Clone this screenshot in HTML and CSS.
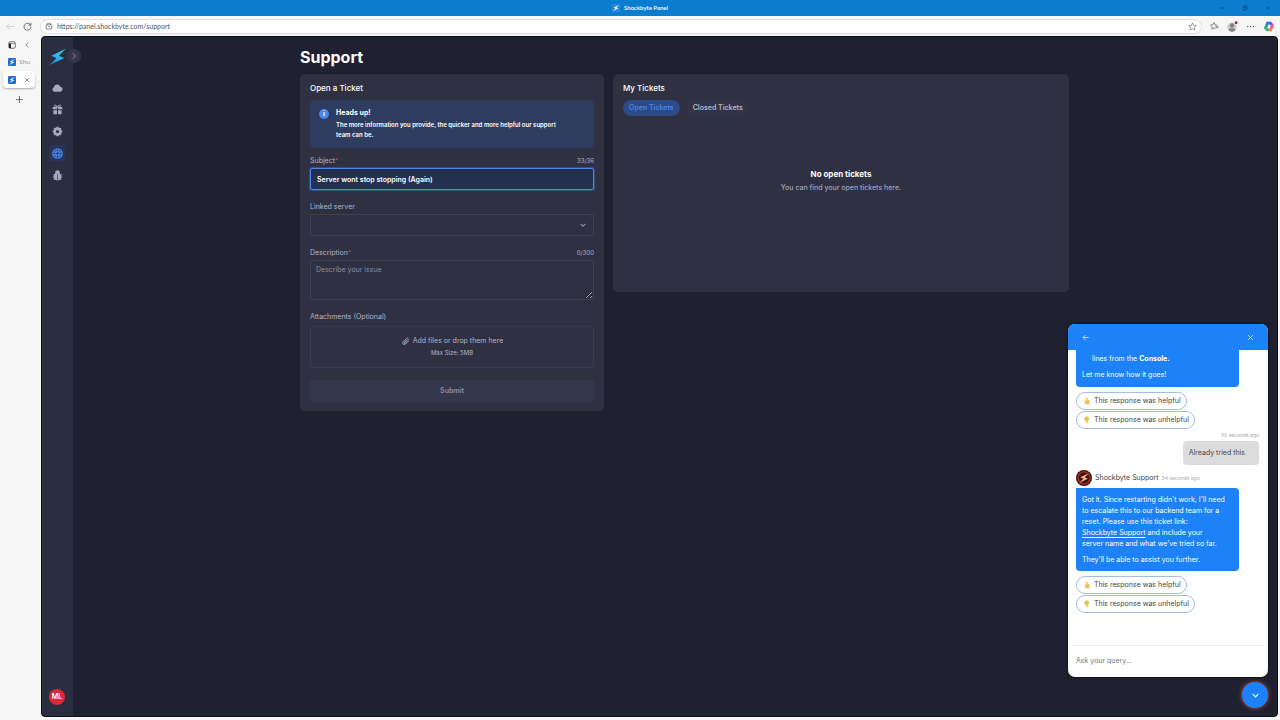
FILE: index.html
```html
<!DOCTYPE html>
<html lang="en">
<head>
    <meta charset="UTF-8">
    <meta name="viewport" content="width=device-width, initial-scale=1.0">
    <title>Shockbyte Panel</title>
    <link rel="stylesheet" href="styles.css">
</head>
<body>
    <!-- Shared shapes -->
    <svg class="defs" aria-hidden="true">
        <defs>
            <linearGradient id="bolt-fill" x1="1" y1="0" x2="0" y2="1">
                <stop offset="0" stop-color="#35dcd0"/>
                <stop offset="0.5" stop-color="#2eb2f2"/>
                <stop offset="1" stop-color="#2764dd"/>
            </linearGradient>
            <symbol id="bolt" viewBox="0 0 16 16">
                <path d="M15.800.3 2.200 6.800 7 9.200.2 15.800 14.200 9 9.200 6.800z"/>
            </symbol>
            <symbol id="close" viewBox="0 0 10 10">
                <path d="M1.5 1.5l7 7M8.5 1.5l-7 7" fill="none" stroke="currentColor"/>
            </symbol>
            <symbol id="chevron-down" viewBox="0 0 10 10">
                <path d="M2 3.500 5 6.500l3-3" fill="none" stroke="currentColor" stroke-width="1.300"/>
            </symbol>
            <symbol id="thumb" viewBox="0 0 16 16">
                <path d="M7.500 1c1.500 0 1.800 1 1.700 5.500h2.300c1.500 0 1.800 1.500 1 2.200.8.8.5 1.900-.2 2.200.5.9 0 1.800-.6 2 .1 1.300-.8 2.100-2 2.100H6.500L3.500 12.500V8.500C5.500 7.500 6.200 5 6.200 2z" fill="#f0c455"/>
                <path d="M9 9h3M9 11.500h2.500" stroke="#cf9b3a" fill="none"/>
            </symbol>
        </defs>
    </svg>

    <header class="titlebar">
        <div class="window-title">
            <svg class="title-icon" viewBox="0 0 16 16"><rect width="16" height="16" rx="3" fill="#2a86e2"/><use href="#bolt" x="2" y="2" width="12" height="12" fill="#fff"/></svg>
            <span>Shockbyte Panel</span>
        </div>
        <div class="window-controls">
            <button type="button" aria-label="Minimize"><svg viewBox="0 0 10 10"><path d="M1 5h8" stroke="currentColor"/></svg></button>
            <button type="button" aria-label="Restore"><svg viewBox="0 0 10 10"><path d="M1.500 3.500h5v5h-5zM3.500 3V1.500h5v5H7" fill="none" stroke="currentColor"/></svg></button>
            <button type="button" aria-label="Close"><svg><use href="#close"/></svg></button>
        </div>
    </header>

    <div class="toolbar">
        <button type="button" class="tool faded" aria-label="Back"><svg viewBox="0 0 16 16"><path d="M15 8H1.500M7 2.500 1.500 8 7 13.500" fill="none" stroke="currentColor"/></svg></button>
        <button type="button" class="tool" aria-label="Refresh"><svg viewBox="0 0 16 16"><path d="M13.500 5.500A6.200 6.200 0 1 0 14.200 8M14 1.500v4.200H9.800" fill="none" stroke="currentColor" stroke-width="1.400"/></svg></button>
        <div class="address">
            <svg viewBox="0 0 16 16"><path d="M2.500 5.500h11v8.500h-11zM5 5.500V2.500h6v3M6 9h4" fill="none" stroke="currentColor" stroke-width="1.300"/></svg>
            <input type="text" aria-label="Address" value="https://panel.shockbyte.com/support">
            <button type="button" aria-label="Add to favorites"><svg viewBox="0 0 16 16"><path d="M8 1.500l2 4.300 4.700.6-3.500 3.200.9 4.700L8 12l-4.100 2.300.9-4.700L1.300 6.400 6 5.800z" fill="none" stroke="currentColor"/></svg></button>
        </div>
        <div class="tool-group">
            <button type="button" class="tool" aria-label="Favorites"><svg viewBox="0 0 16 16"><path d="M9.500 11.800 7 10.500l-3.700 2.200.8-4.300L1 5.500l4.200-.6L7 1l1.900 3.900 3.100.5M9 7.500h6M10 10h5" fill="none" stroke="currentColor" stroke-width="1.200"/></svg></button>
            <button type="button" class="tool profile" aria-label="Profile"><svg viewBox="0 0 20 20"><circle cx="9" cy="11" r="8.500" fill="#d0cfd0"/><circle cx="9" cy="8" r="4" fill="#858285"/><path d="M2.500 16.500c1-5 12-5 13 0a8.500 8.500 0 0 1-13 0" fill="#858285"/><circle cx="16.500" cy="3" r="2.500" fill="#b01030"/></svg></button>
            <button type="button" class="tool" aria-label="More"><svg viewBox="0 0 16 16" fill="currentColor"><circle cx="3" cy="8" r="1.200"/><circle cx="8" cy="8" r="1.200"/><circle cx="13" cy="8" r="1.200"/></svg></button>
            <button type="button" class="tool copilot" aria-label="Copilot"><svg viewBox="0 0 20 20" fill="none" stroke-width="5" stroke-linecap="round"><path d="M5 13 8 4h5" stroke="#2a83dc"/><path d="M13 4c2 0 2 2 4 4" stroke="#7652d8"/><path d="M17 8l-3 8" stroke="#ed5a88"/><path d="M14 16H8" stroke="#f08b3c"/><path d="M8 16c-2 0-2-3-4-4" stroke="#39b777"/></svg></button>
        </div>
    </div>

    <div class="browser">
        <aside class="tabs">
            <div class="tab-row">
                <svg viewBox="0 0 16 16"><rect x="1.500" y="1.500" width="13" height="13" rx="3" fill="none" stroke="#444" stroke-width="1.500"/><path d="M2 5h4v9H3a1 1 0 0 1-1-1z" fill="#222"/><path d="M2 5h12" stroke="#444"/></svg>
                <button type="button" aria-label="Collapse tabs"><svg viewBox="0 0 10 10"><path d="M7 1 3 5l4 4" fill="none" stroke="currentColor"/></svg></button>
            </div>
            <a class="tab-row" href="#">
                <svg viewBox="0 0 16 16"><rect width="16" height="16" rx="2" fill="#246cd0"/><use href="#bolt" x="2" y="2" width="12" height="12" fill="#d7f2ff"/></svg>
                <span class="tab-name">Shu</span>
            </a>
            <div class="tab-row active">
                <svg viewBox="0 0 16 16"><rect width="16" height="16" rx="2" fill="#246cd0"/><use href="#bolt" x="2" y="2" width="12" height="12" fill="#d7f2ff"/></svg>
                <button type="button" aria-label="Close tab"><svg><use href="#close"/></svg></button>
            </div>
            <button type="button" class="new-tab" aria-label="New tab"><svg viewBox="0 0 10 10"><path d="M5 0v10M0 5h10" stroke="currentColor"/></svg></button>
        </aside>

        <div class="panel">
            <nav class="sidebar">
                <a class="brand" href="#" aria-label="Shockbyte"><svg fill="url(#bolt-fill)"><use href="#bolt"/></svg></a>
                <button type="button" class="expand" aria-label="Expand menu"><svg viewBox="0 0 10 10"><path d="M3.500 1.500 7 5 3.500 8.500" fill="none" stroke="currentColor"/></svg></button>
                <a class="nav-link" href="#" aria-label="Servers"><svg viewBox="0 0 16 16"><path d="M3.500 14a3.300 3.300 0 0 1-.8-6.300 4.800 4.800 0 0 1 9.300-.8A3.600 3.600 0 0 1 12.500 14z"/></svg></a>
                <a class="nav-link" href="#" aria-label="Rewards"><svg viewBox="0 0 16 16"><path d="M1 4.500h6.300v3.300H1zM8.700 4.500H15v3.300H8.700zM2 9h5.300v6H2zM8.700 9H14v6H8.700z"/><path d="M8 4.500C6.500 1 3 .5 3.500 3c.2 1 2 1.500 4.500 1.500C10.500 4.500 12.300 4 12.500 3 13 .5 9.500 1 8 4.500z" fill="none" stroke="currentColor" stroke-width="1.400"/></svg></a>
                <a class="nav-link" href="#" aria-label="Settings"><svg viewBox="0 0 16 16"><circle cx="8" cy="8" r="4" fill="none" stroke="currentColor" stroke-width="3.400"/><path d="M8 1v3M8 12v3M1 8h3M12 8h3M3.100 3.100 5 5M11 11l1.900 1.900M12.900 3.100 11 5M5 11l-1.900 1.900" stroke="currentColor" stroke-width="3"/></svg></a>
                <a class="nav-link active" href="#" aria-label="Support"><svg viewBox="0 0 16 16" fill="none" stroke="currentColor" stroke-width="1.800"><circle cx="8" cy="8" r="6.900"/><circle cx="8" cy="8" r="2.600"/><path d="M6 1.500v4.300M10 1.500v4.300M6 10.200v4.300M10 10.200v4.300M1.500 6h4.300M1.500 10h4.300M10.200 6h4.300M10.200 10h4.300"/></svg></a>
                <a class="nav-link" href="#" aria-label="Report a bug"><svg viewBox="0 0 16 16"><path d="M4.500 4a3.500 3.500 0 0 1 7 0v2h-7zM3 6.200h4.600v9C5 15 3 13 3 10.500zM8.400 6.200H13v4.300c0 2.500-2 4.500-4.600 4.700z"/><path d="M4.500 8 2 6.500M4 10.500H1.200M4.500 12.500 2.500 14M11.500 8 14 6.500M12 10.500h2.800M11.500 12.500l2 1.500" fill="none" stroke="currentColor" stroke-width="1.800"/></svg></a>
                <button type="button" class="account">ML</button>
            </nav>

            <main class="main">
                <div class="content">
                    <h1>Support</h1>
                    <div class="cards">
                        <form class="card ticket-form">
                            <h2>Open a Ticket</h2>
                            <div class="notice">
                                <span class="notice-icon">i</span>
                                <div>
                                    <h3>Heads up!</h3>
                                    <p>The more information you provide, the quicker and more helpful our support team can be.</p>
                                </div>
                            </div>
                            <div class="field">
                                <div class="field-head">
                                    <label for="subject">Subject<span class="required">*</span></label>
                                    <span>33/36</span>
                                </div>
                                <input id="subject" class="control focused" type="text" value="Server wont stop stopping (Again)">
                            </div>
                            <div class="field">
                                <div class="field-head"><label for="server">Linked server</label></div>
                                <div class="select-wrap">
                                    <select id="server" class="control"><option></option></select>
                                    <svg><use href="#chevron-down"/></svg>
                                </div>
                            </div>
                            <div class="field">
                                <div class="field-head">
                                    <label for="description">Description<span class="required">*</span></label>
                                    <span>0/300</span>
                                </div>
                                <textarea id="description" class="control" placeholder="Describe your issue"></textarea>
                            </div>
                            <div class="field">
                                <div class="field-head"><label for="files">Attachments (Optional)</label></div>
                                <label class="dropzone" for="files">
                                    <span class="drop-title">
                                        <svg viewBox="0 0 16 16"><path d="M13.500 7 8 12.500c-3 3-7-1-4-4L9.500 3c2.200-2 5 .8 3 3L7 11.500c-1.200 1-2.500-.3-1.500-1.500L10.500 5" fill="none" stroke="currentColor" stroke-width="1.500"/></svg>
                                        Add files or drop them here
                                    </span>
                                    <span class="drop-note">Max Size: 5MB</span>
                                </label>
                                <input id="files" class="file-input" type="file">
                            </div>
                            <button type="submit" class="submit" disabled>Submit</button>
                        </form>

                        <section class="card tickets">
                            <h2>My Tickets</h2>
                            <div class="filters">
                                <button type="button" class="filter selected">Open Tickets</button>
                                <button type="button" class="filter">Closed Tickets</button>
                            </div>
                            <div class="empty">
                                <h3>No open tickets</h3>
                                <p>You can find your open tickets here.</p>
                            </div>
                        </section>
                    </div>
                </div>
            </main>

            <section class="chat">
                <header class="chat-header">
                    <button type="button" aria-label="Back"><svg viewBox="0 0 10 10"><path d="M9.500 5h-8M5 1.500 1.500 5 5 8.500" fill="none" stroke="currentColor"/></svg></button>
                    <button type="button" aria-label="Close chat"><svg><use href="#close"/></svg></button>
                </header>
                <div class="messages">
                    <div class="bubble continued">
                        <p class="indent">lines from the <strong>Console.</strong></p>
                        <p>Let me know how it goes!</p>
                    </div>
                    <div class="replies">
                        <button type="button"><svg><use href="#thumb"/></svg>This response was helpful</button>
                        <button type="button"><svg class="down"><use href="#thumb"/></svg>This response was unhelpful</button>
                    </div>
                    <div class="visitor">
                        <time>50 seconds ago</time>
                        <p>Already tried this</p>
                    </div>
                    <div class="agent">
                        <svg viewBox="0 0 16 16"><circle cx="8" cy="8" r="8" fill="#34100d"/><circle cx="8" cy="8" r="6" fill="none" stroke="#962619" stroke-width="2"/><use href="#bolt" x="3" y="3" width="10" height="10" fill="#ffb58a"/></svg>
                        <span>Shockbyte Support</span>
                        <time>34 seconds ago</time>
                    </div>
                    <div class="bubble">
                        <p>Got it. Since restarting didn't work, I'll need to escalate this to our backend team for a reset. Please use this ticket link:<br><a href="#">Shockbyte Support</a> and include your<br>server name and what we've tried so far.</p>
                        <p>They'll be able to assist you further.</p>
                    </div>
                    <div class="replies">
                        <button type="button"><svg><use href="#thumb"/></svg>This response was helpful</button>
                        <button type="button"><svg class="down"><use href="#thumb"/></svg>This response was unhelpful</button>
                    </div>
                </div>
                <footer class="chat-footer">
                    <input type="text" aria-label="Message" placeholder="Ask your query...">
                </footer>
            </section>
            <button type="button" class="launcher" aria-label="Toggle chat"><svg><use href="#chevron-down"/></svg></button>
        </div>
    </div>
</body>
</html>
```

FILE: styles.css
```css
:root {
    --page-bg: #202130;
    --sidebar-bg: #2b2d40;
    --card-bg: #2f3041;
    --border: #3f4153;
    --text: #ffffff;
    --text-soft: #b4b5cb;
    --text-muted: #8b8ca6;
    --accent: #4588ee;
    --chat-blue: #1d82f8;
}

* {
    margin: 0;
    padding: 0;
    box-sizing: border-box;
}

body {
    display: flex;
    flex-direction: column;
    height: 100vh;
    overflow: hidden;
    background: #f6f6f6;
    color: var(--text);
    font-family: Inter, "Liberation Sans", sans-serif;
    font-size: 7px;
    line-height: 10px;
}

button,
input,
select,
textarea {
    border: 0;
    background: none;
    color: inherit;
    font: inherit;
    outline: none;
}

a {
    color: inherit;
    text-decoration: none;
}

svg {
    display: block;
    flex: none;
}

.defs {
    position: absolute;
    width: 0;
    height: 0;
}

/* Browser window */
.titlebar {
    display: grid;
    grid-template-columns: 1fr auto 1fr;
    align-items: center;
    height: 16px;
    flex: none;
    background: #0b7dce;
}

.window-title {
    grid-column: 2;
    display: flex;
    align-items: center;
    gap: 4px;
    font-family: Lato, sans-serif;
    font-weight: 600;
    font-size: 6px;
}

.title-icon {
    width: 8px;
    height: 8px;
}

.window-controls {
    display: flex;
    justify-content: flex-end;
    gap: 17px;
    padding-right: 9px;
    color: #063b68;
}

.window-controls svg {
    width: 6px;
    height: 6px;
}

.toolbar {
    display: flex;
    align-items: center;
    height: 20px;
    flex: none;
    gap: 8px;
    padding: 0 6px;
    color: #555;
}

.tool svg {
    width: 9px;
    height: 9px;
}

.faded {
    color: #bbb;
}

.address {
    display: flex;
    align-items: center;
    flex: 1;
    height: 15px;
    gap: 4px;
    padding: 0 4px;
    border: 1px solid #e0e0e2;
    border-radius: 8px;
    background: #fff;
}

.address svg {
    width: 8px;
    height: 8px;
}

.address button svg {
    width: 9px;
    height: 9px;
}

.address input {
    flex: 1;
    color: #555;
    font-family: Lato, sans-serif;
}

.tool-group {
    display: flex;
    align-items: center;
    gap: 8px;
}

.profile svg,
.copilot svg {
    width: 11px;
    height: 11px;
}

.browser {
    display: flex;
    flex: 1;
    min-height: 0;
    padding: 0 2px 3px 0;
}

.tabs {
    width: 41px;
    flex: none;
    padding: 0 6px 0 3px;
    color: #444;
}

.tab-row {
    display: flex;
    align-items: center;
    justify-content: space-between;
    height: 17px;
    padding: 0 5px;
}

.tab-row svg {
    width: 8px;
    height: 8px;
}

.tab-row button svg {
    width: 6px;
    height: 6px;
}

.tab-row.active {
    margin-top: 1px;
    border-radius: 4px;
    background: #fff;
    box-shadow: 0 1px 2px #aaa;
}

.tab-name {
    color: #888;
    font-family: "Open Sans", sans-serif;
    font-size: 6px;
}

.new-tab {
    display: flex;
    justify-content: center;
    width: 100%;
    padding: 8px 0;
}

.new-tab svg {
    width: 7px;
    height: 7px;
}

/* Panel */
.panel {
    position: relative;
    display: flex;
    flex: 1;
    min-width: 0;
    border: 1px solid #0d0e18;
    border-radius: 4px;
    background: var(--page-bg);
}

.sidebar {
    position: relative;
    display: flex;
    flex-direction: column;
    align-items: center;
    width: 31px;
    flex: none;
    padding: 10px 1px 11px 0;
    gap: 6px;
    border-radius: 4px 0 0 4px;
    background: var(--sidebar-bg);
    color: #a6a8bd;
}

.brand {
    margin-bottom: 6px;
}

.brand svg {
    width: 17px;
    height: 20px;
}

.expand {
    position: absolute;
    top: 12px;
    right: -8px;
    display: grid;
    place-items: center;
    width: 14px;
    height: 14px;
    border-radius: 50%;
    background: #343548;
}

.expand svg {
    width: 8px;
    height: 8px;
}

.nav-link {
    display: grid;
    place-items: center;
    width: 16px;
    height: 16px;
    border-radius: 3px;
}

.nav-link svg {
    width: 11px;
    height: 11px;
    fill: currentColor;
}

.nav-link.active {
    background: #29365a;
    color: var(--accent);
}

.nav-link.active svg {
    fill: none;
}

.account {
    width: 16px;
    height: 16px;
    margin-top: auto;
    border-radius: 50%;
    background: #dc2837;
    color: #fff;
    font-weight: 600;
}

.main {
    flex: 1;
    min-width: 0;
    padding: 10px 0 0 19px;
}

.content {
    max-width: 769px;
    margin: 0 auto;
}

h1 {
    margin-bottom: 7px;
    font-size: 16px;
    font-weight: 700;
    line-height: 20px;
}

h2 {
    font-size: 8px;
    font-weight: 500;
    line-height: 10px;
}

.cards {
    display: grid;
    grid-template-columns: 2fr 3fr;
    align-items: start;
    gap: 9px;
}

.card {
    border-radius: 5px;
    background: var(--card-bg);
    padding: 9px 10px;
}

.notice {
    display: flex;
    gap: 7px;
    margin: 7px 0 8px;
    padding: 8px 28px 8px 9px;
    border-radius: 5px;
    background: #2e3c60;
}

.notice-icon {
    width: 10px;
    height: 10px;
    margin-top: 1px;
    flex: none;
    border-radius: 50%;
    background: var(--accent);
    font-weight: 700;
    text-align: center;
}

.notice h3 {
    margin-bottom: 2px;
    font-size: 7px;
    font-weight: 700;
}

.notice p {
    font-size: 6px;
    font-weight: 600;
}

.field {
    margin-bottom: 12px;
}

.field-head {
    display: flex;
    justify-content: space-between;
    margin-bottom: 2px;
    color: var(--text-soft);
}

.field-head span {
    font-size: 6px;
}

.field-head .required {
    color: #e5486a;
}

.control {
    display: block;
    width: 100%;
    height: 22px;
    padding: 0 6px;
    border: 1px solid var(--border);
    border-radius: 2px;
}

.control.focused {
    border-color: var(--accent);
    background: #243050;
    box-shadow: 0 0 0 1px #4588ee55;
    font-weight: 600;
}

.select-wrap {
    position: relative;
}

.select-wrap select {
    appearance: none;
}

.select-wrap svg {
    position: absolute;
    top: 7px;
    right: 7px;
    width: 8px;
    height: 8px;
    color: var(--text-muted);
    pointer-events: none;
}

textarea.control {
    height: 40px;
    padding: 4px 5px;
    resize: vertical;
}

textarea::placeholder {
    color: var(--text-muted);
}

.dropzone {
    display: flex;
    flex-direction: column;
    align-items: center;
    justify-content: center;
    gap: 2px;
    height: 42px;
    margin-top: 4px;
    border: 1px solid #3a3b4e;
    border-radius: 2px;
    color: var(--text-soft);
}

.drop-title {
    display: flex;
    align-items: center;
    gap: 3px;
}

.drop-title svg {
    width: 9px;
    height: 9px;
}

.drop-note {
    font-size: 6px;
}

.file-input {
    display: none;
}

.submit {
    display: block;
    width: 100%;
    height: 22px;
    border-radius: 3px;
    background: #34364b;
    color: var(--text-muted);
    font-weight: 600;
}

.tickets {
    min-height: 218px;
}

.filters {
    display: flex;
    gap: 7px;
    margin-top: 7px;
}

.filter {
    height: 16px;
    padding: 0 6px;
    border-radius: 8px;
    background: #313346;
    color: var(--text-soft);
    font-weight: 600;
}

.filter.selected {
    background: #2b4a86;
    color: #4585e8;
}

.empty {
    padding-top: 53px;
    text-align: center;
}

.empty h3 {
    margin-bottom: 4px;
    font-size: 8px;
    font-weight: 700;
}

.empty p {
    color: #a1a2bd;
    font-weight: 500;
}

/* Chat widget */
.chat {
    position: absolute;
    right: 9px;
    bottom: 39px;
    display: flex;
    flex-direction: column;
    width: 200px;
    height: 353px;
    overflow: hidden;
    border-radius: 7px;
    background: #fff;
    box-shadow: 0 0 3px #000;
    color: #444;
}

.chat-header {
    display: flex;
    align-items: center;
    justify-content: space-between;
    height: 26px;
    padding: 0 14px;
    background: var(--chat-blue);
    color: #fff;
}

.chat-header svg {
    width: 7px;
    height: 7px;
}

.messages {
    flex: 1;
    padding: 0 9px 0 8px;
}

.bubble {
    width: 163px;
    padding: 6px;
    border-radius: 0 4px 4px 4px;
    background: var(--chat-blue);
    color: #fff;
    line-height: 11px;
}

.bubble p + p {
    margin-top: 5px;
}

.bubble a {
    text-decoration: underline;
    text-underline-offset: 2px;
}

.bubble.continued {
    padding: 3px 6px 7px;
    border-radius: 0 0 4px 4px;
}

.indent {
    padding-left: 10px;
}

.replies {
    display: flex;
    flex-direction: column;
    align-items: flex-start;
    gap: 1px;
    margin-top: 5px;
}

.replies button {
    display: flex;
    align-items: center;
    height: 18px;
    gap: 3px;
    padding: 0 5px 0 6px;
    border: 1px solid #a5bde0;
    border-radius: 9px;
}

.replies svg {
    width: 8px;
    height: 8px;
}

.replies .down {
    transform: rotate(180deg);
}

time {
    color: #aaa;
    font-size: 5px;
}

.visitor {
    display: flex;
    flex-direction: column;
    align-items: flex-end;
    gap: 1px;
    margin-top: 1px;
}

.visitor p {
    padding: 7px 14px 7px 6px;
    border-radius: 4px;
    background: #dcdcdc;
}

.agent {
    display: flex;
    align-items: center;
    gap: 3px;
    margin: 5px 0 2px;
}

.agent svg {
    width: 16px;
    height: 16px;
}

.chat-footer {
    height: 32px;
    margin: 0 4px;
    padding: 10px 4px;
    border-top: 1px solid #eee;
}

.chat-footer input {
    display: block;
    width: 100%;
}

.chat-footer input::placeholder {
    color: #777;
}

.launcher {
    position: absolute;
    right: 9px;
    bottom: 8px;
    display: grid;
    place-items: center;
    width: 26px;
    height: 26px;
    border-radius: 50%;
    background: var(--chat-blue);
    box-shadow: 0 0 4px #c95040;
}

.launcher svg {
    width: 9px;
    height: 9px;
}
```
